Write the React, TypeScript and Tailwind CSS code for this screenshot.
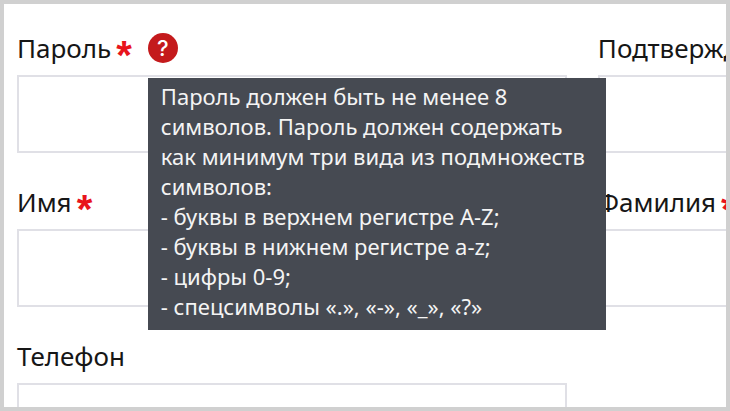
import { useState } from "react";
import type { ReactNode } from "react";

interface FieldProps {
  id: string;
  label: string;
  type?: string;
  required?: boolean;
  children?: ReactNode;
}

function Field({ id, label, type = "text", required, children }: FieldProps) {
  return (
    <div className="flex flex-col gap-[10px]">
      <div className="flex h-[34px] items-center gap-4">
        <label htmlFor={id} className="flex items-center gap-[5px] whitespace-nowrap text-[26px] leading-[34px] text-[#161616]">
          {label}
          {required && (
            <span className="h-[26px] font-['Liberation_Sans'] text-[40px] leading-10 font-bold text-[#e8141c]">*</span>
          )}
        </label>
        {children}
      </div>
      <input
        id={id}
        type={type}
        required={required}
        className="h-[78px] w-full border-2 border-[#e0e0e6] bg-white px-4 text-2xl outline-none focus:border-[#464a52]"
      />
    </div>
  );
}

function PasswordHint() {
  const [open, setOpen] = useState(true);

  return (
    <div className="relative">
      <button
        type="button"
        aria-label="Требования к паролю"
        aria-describedby="password-hint"
        onClick={() => setOpen(!open)}
        className="flex size-[30px] items-center justify-center rounded-full bg-[#c41a1c] font-[Inter] text-[22px] leading-none font-medium text-white"
      >
        ?
      </button>
      {open && (
        <div
          id="password-hint"
          role="tooltip"
          className="absolute top-full left-0 z-10 mt-[15px] w-[458px] bg-[#464a52] px-[13px] pt-[3px] pb-[9px] text-[22px] leading-[30px] text-[#f4f4f4]"
        >
          <p>
            Пароль должен быть не менее 8
            <br />
            символов. Пароль должен содержать
            <br />
            как минимум три вида из подмножеств
            <br />
            символов:
          </p>
          <p>- буквы в верхнем регистре A-Z;</p>
          <p>- буквы в нижнем регистре a-z;</p>
          <p>- цифры 0-9;</p>
          <p>- спецсимволы «.», «-», «_», «?»</p>
        </div>
      )}
    </div>
  );
}

export default function App() {
  return (
    <main className="h-screen overflow-hidden border-4 border-[#d0d0d0] bg-white font-['Noto_Sans',sans-serif]">
      <form className="grid grid-cols-[79%_79%] gap-x-[31px] gap-y-8 px-[13px] pt-[27px]">
        <Field id="password" label="Пароль" type="password" required>
          <PasswordHint />
        </Field>
        <Field id="confirm" label="Подтверждение пароля" type="password" required />
        <Field id="first-name" label="Имя" required />
        <Field id="last-name" label="Фамилия" required />
        <Field id="phone" label="Телефон" type="tel" />
      </form>
    </main>
  );
}
